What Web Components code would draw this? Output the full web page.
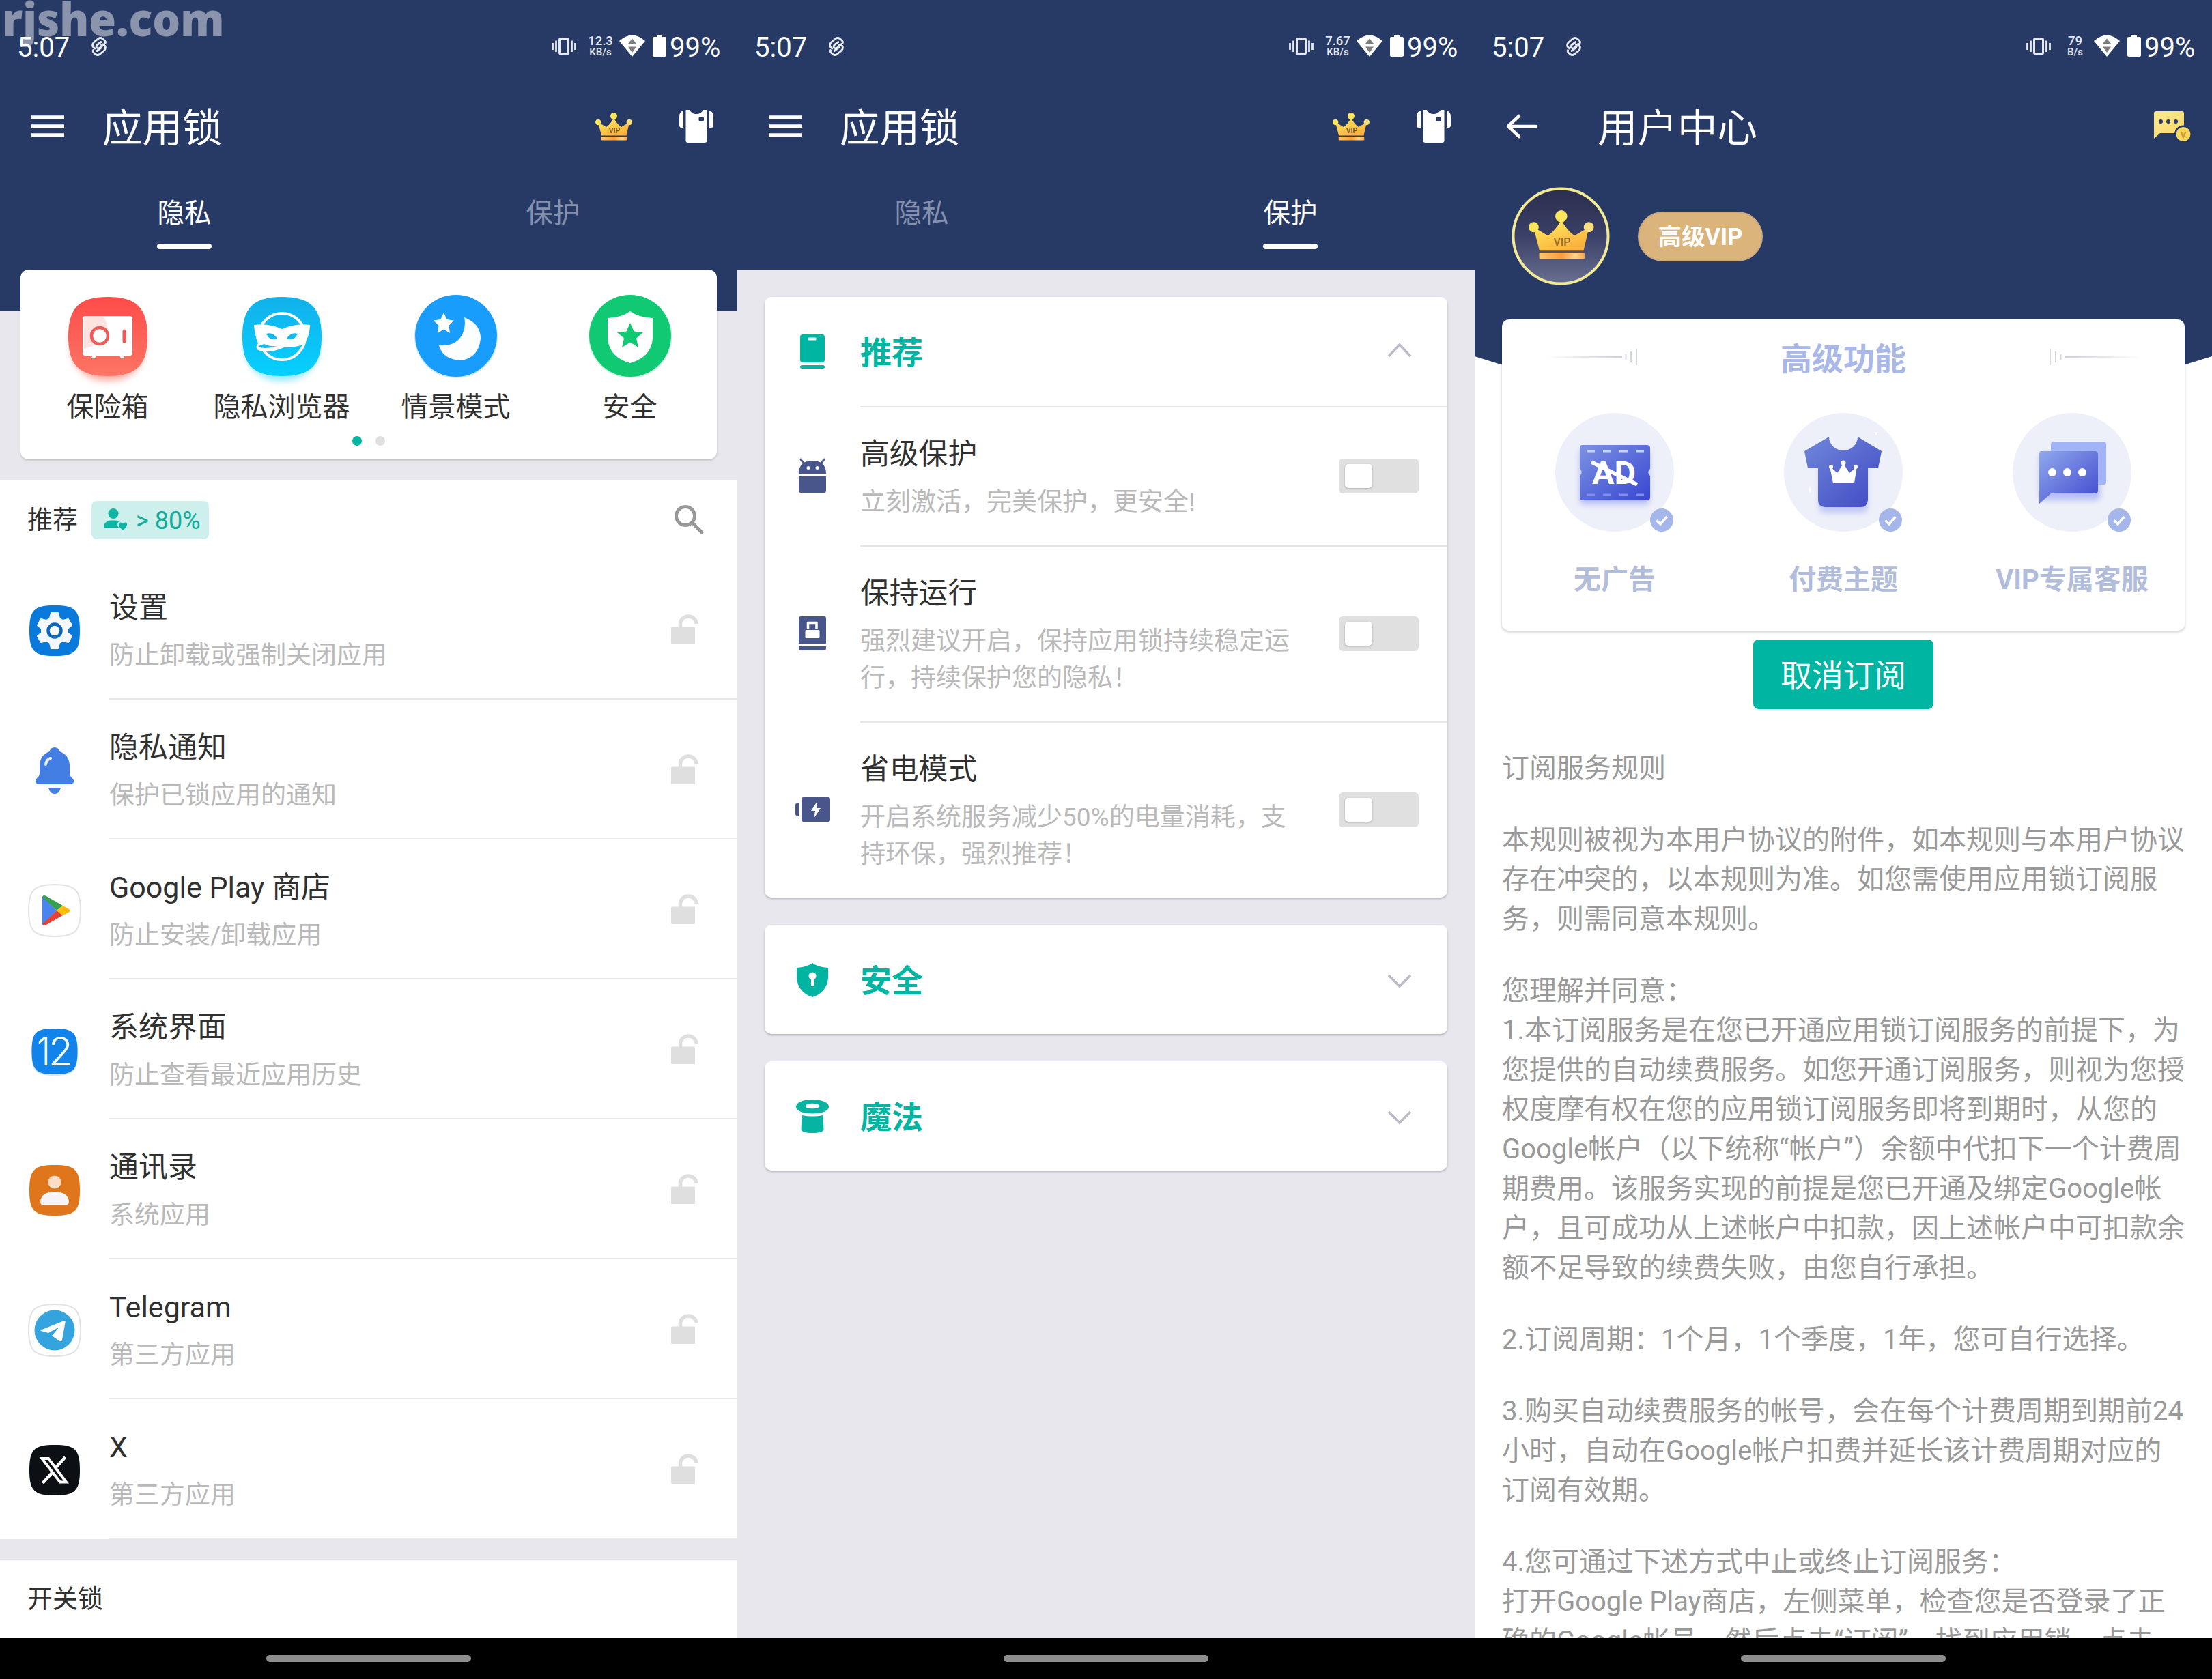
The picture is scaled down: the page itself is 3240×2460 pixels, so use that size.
<!DOCTYPE html>
<html lang="zh-CN">
<head>
<meta charset="UTF-8">
<title>应用锁</title>
<style>
  html, body {
    margin: 0;
    padding: 0;
  }
  body {
    position: relative;
    width: 3240px;
    height: 2460px;
    overflow: hidden;
    display: flex;
    background: #fff;
    font-family: Roboto, "Noto Sans CJK SC", sans-serif;
    text-spacing-trim: space-all;
    --navy: #273a66;
    --teal: #00b6a3;
    --page: #e8e7ed;
    --ink: #303030;
    --muted: #b9b9b9;
  }
</style>
</head>
<body>

<phone-screen>
  <status-bar rate="12.3" unit="KB/s"></status-bar>
  <app-bar title="应用锁">
    <svg-icon slot="nav" name="menu"></svg-icon>
    <svg-icon name="crown"></svg-icon>
    <svg-icon name="shirt"></svg-icon>
  </app-bar>
  <tab-bar active="0"></tab-bar>
  <quick-card>
    <quick-item icon="safe">保险箱</quick-item>
    <quick-item icon="mask">隐私浏览器</quick-item>
    <quick-item icon="moon">情景模式</quick-item>
    <quick-item icon="shieldStar">安全</quick-item>
  </quick-card>
  <list-head title="推荐" badge="&gt; 80%"></list-head>
  <app-row icon="gear" title="设置">防止卸载或强制关闭应用</app-row>
  <app-row icon="bell" title="隐私通知">保护已锁应用的通知</app-row>
  <app-row icon="play" title="Google Play 商店">防止安装/卸载应用</app-row>
  <app-row icon="twelve" title="系统界面">防止查看最近应用历史</app-row>
  <app-row icon="contacts" title="通讯录">系统应用</app-row>
  <app-row icon="telegram" title="Telegram">第三方应用</app-row>
  <app-row icon="xlogo" title="X">第三方应用</app-row>
  <list-head title="开关锁" spaced></list-head>
</phone-screen>

<phone-screen gray>
  <status-bar rate="7.67" unit="KB/s"></status-bar>
  <app-bar title="应用锁">
    <svg-icon slot="nav" name="menu"></svg-icon>
    <svg-icon name="crown"></svg-icon>
    <svg-icon name="shirt"></svg-icon>
  </app-bar>
  <tab-bar active="1"></tab-bar>
  <card-stack>
    <protect-card icon="phone" title="推荐" open>
      <protect-row icon="android" title="高级保护">立刻激活，完美保护，更安全!</protect-row>
      <protect-row icon="keepLock" title="保持运行">强烈建议开启，保持应用锁持续稳定运<br>行，持续保护您的隐私！</protect-row>
      <protect-row icon="battery" title="省电模式">开启系统服务减少50%的电量消耗，支<br>持环保，强烈推荐！</protect-row>
    </protect-card>
    <protect-card icon="shieldKey" title="安全"></protect-card>
    <protect-card icon="hat" title="魔法"></protect-card>
  </card-stack>
</phone-screen>

<phone-screen curved>
  <status-bar rate="79" unit="B/s"></status-bar>
  <app-bar title="用户中心" wide>
    <svg-icon slot="nav" name="back"></svg-icon>
    <svg-icon name="message"></svg-icon>
  </app-bar>
  <vip-profile>高级VIP</vip-profile>
  <vip-card title="高级功能">
    <vip-feature icon="noAd">无广告</vip-feature>
    <vip-feature icon="tee">付费主题</vip-feature>
    <vip-feature icon="chat">VIP专属客服</vip-feature>
  </vip-card>
  <sub-button>取消订阅</sub-button>
  <rule-text>
    <p>订阅服务规则</p>
    <p>本规则被视为本用户协议的附件，如本规则与本用户协议<br>存在冲突的，以本规则为准。如您需使用应用锁订阅服<br>务，则需同意本规则。</p>
    <p>您理解并同意：<br>1.本订阅服务是在您已开通应用锁订阅服务的前提下，为<br>您提供的自动续费服务。如您开通订阅服务，则视为您授<br>权度摩有权在您的应用锁订阅服务即将到期时，从您的<br>Google帐户（以下统称“帐户”）余额中代扣下一个计费周<br>期费用。该服务实现的前提是您已开通及绑定Google帐<br>户，且可成功从上述帐户中扣款，因上述帐户中可扣款余<br>额不足导致的续费失败，由您自行承担。</p>
    <p>2.订阅周期：1个月，1个季度，1年，您可自行选择。</p>
    <p>3.购买自动续费服务的帐号，会在每个计费周期到期前24<br>小时，自动在Google帐户扣费并延长该计费周期对应的<br>订阅有效期。</p>
    <p>4.您可通过下述方式中止或终止订阅服务：<br>打开Google Play商店，左侧菜单，检查您是否登录了正<br>确的Google帐号，然后点击“订阅”，找到应用锁，点击</p>
  </rule-text>
</phone-screen>

<water-mark>rjshe.com</water-mark>

<script>
// name: [width, height, markup]
const CROWN = `
  <defs>
    <linearGradient id="cg" x1="0" y1="0" x2="0.6" y2="1">
      <stop offset="0" stop-color="#fbf06a"/><stop offset=".5" stop-color="#fdd04f"/><stop offset="1" stop-color="#fbb03c"/>
    </linearGradient>
    <linearGradient id="cb" x1="0" y1="0" x2="1" y2="0">
      <stop offset="0" stop-color="#fbc96a"/><stop offset=".5" stop-color="#f99f3a"/><stop offset=".8" stop-color="#fdd48a"/><stop offset="1" stop-color="#f9a94a"/>
    </linearGradient>
  </defs>
  <path d="M4 14 L16 21 Q22 17 27 8 Q32 17 38 21 L50 14 L45.500 33.500 H9 Z" fill="url(#cg)"/>
  <rect x="8.800" y="35" width="37.500" height="5.500" rx="1" fill="url(#cb)"/>
  <circle cx="27" cy="5" r="5" fill="#fbe75e"/>
  <circle cx="4.200" cy="14" r="4.200" fill="#fae65c"/>
  <circle cx="49.800" cy="14" r="4.200" fill="#fbdf80"/>`;

const ICONS = {
  menu: [48, 32, `<path d="M0 3H48M0 16H48M0 29H48" stroke="#fff" stroke-width="5.500"/>`],
  back: [46, 36, `<path d="M44 18H4M19 3L3 18L19 33" fill="none" stroke="#fff" stroke-width="4.500" stroke-linecap="round" stroke-linejoin="round"/>`],
  crown: [54, 41, CROWN + `<text x="28" y="30" font-size="10.500" text-anchor="middle" fill="#6b4a1c" font-weight="500">VIP</text>`],
  shirt: [50, 49, `<path d="M6 1V26H3Q0 26 0 22V9Q0 3 6 1ZM44 1V26H47Q50 26 50 22V9Q50 3 44 1Z" fill="#fff"/>
    <path d="M9.500 0H15Q18 6 25 6Q32 6 35 0H40.500V45Q40.500 48 37 48H13Q9.500 48 9.500 45Z" fill="#fff"/>
    <rect x="28.500" y="10.500" width="7.500" height="6" rx="1.500" fill="#273a66"/>`],
  message: [54, 45, `<defs><linearGradient id="mg" x1="0" y1="0" x2="1" y2="1"><stop offset="0" stop-color="#fbe88f"/><stop offset="1" stop-color="#f6d868"/></linearGradient></defs>
    <path d="M3 0H41Q44 0 44 3V28Q44 32 40 32H9L0 40V3Q0 0 3 0Z" fill="url(#mg)"/>
    <circle cx="10" cy="15" r="3" fill="#273a66"/><circle cx="21" cy="15" r="3" fill="#273a66"/><circle cx="32" cy="15" r="3" fill="#273a66"/>
    <circle cx="43" cy="33.500" r="13" fill="#273a66"/><circle cx="43" cy="33.500" r="10.500" fill="#f8d75e"/>
    <path d="M39.500 30L43 37.500L46.500 30" fill="none" stroke="#d29a2e" stroke-width="2.500"/>`],
  link: [24, 30, `<g fill="none" stroke="#e8ebf2" stroke-width="2.800" stroke-linecap="round" stroke-linejoin="round">
    <path d="M6 18Q2.500 16 2.500 13Q2.500 10.500 5 8.500L11 3.500Q14 1.500 17 3.500L19.500 5.500Q22.500 8 21 10.500L13 17Q10.500 19 8.500 16.500Q7.500 14.500 9.500 12.500L15 8.500"/>
    <path d="M18 12Q21.500 14 21.500 17Q21.500 19.500 19 21.500L13 26.500Q10 28.500 7 26.500L4.500 24.500Q2.500 22.500 3.500 20.500M15.500 13Q17 15.500 14.500 17.500L9 21.500"/></g>`],
  vibrate: [36, 26, `<g fill="none" stroke="#e6e9f1"><rect x="11.500" y="1.700" width="13" height="22" rx="1.500" stroke-width="3"/>
    <path d="M6.500 4.500V21M1.500 8V18M29.500 4.500V21M34.500 8V18" stroke-width="2.800"/></g>`],
  wifi: [38, 32, `<path d="M0 9Q19 -8 38 9L19 32Z" fill="#fff"/><path d="M13 13L19 5.500L25 13ZM13 17.500H25L19 26Z" fill="#7d7d7d"/>`],
  cell: [20, 32, `<path d="M6 0H14V3H18Q20 3 20 5V30Q20 32 18 32H2Q0 32 0 30V5Q0 3 2 3H6Z" fill="#fff"/>`],
  search: [45, 45, `<circle cx="17" cy="17" r="13.500" fill="none" stroke="#989898" stroke-width="5"/><path d="M27 27L41 41" stroke="#989898" stroke-width="5" stroke-linecap="round"/>`],
  unlock: [40, 46, `<rect x="0" y="20.500" width="35" height="25.500" rx="1.500" fill="#dfdfdf"/>
    <path d="M13.500 22V14.500A12 12 0 0 1 37 14.500V16" fill="none" stroke="#dfdfdf" stroke-width="5.500"/>`],
  people: [34, 33, `<g fill="#0db4a2"><circle cx="14" cy="7.500" r="7.500"/><path d="M0 29V27Q1 18 10 17.500H17Q21 17.700 22.500 19Q18.500 22 21 26.500L23 29Z"/>
    <path d="M28 32Q20.500 26 22 22Q25 19 28 22.500Q31 19 34 22Q35 26 28 32Z"/></g>`],

  safe: [136, 136, `<defs><linearGradient id="sf" x1="0" y1="0" x2="0" y2="1"><stop offset="0" stop-color="#fd4c49"/><stop offset="1" stop-color="#fc7565"/></linearGradient>
    <filter id="sfb" x="-30%" y="-30%" width="160%" height="160%"><feGaussianBlur stdDeviation="5"/></filter></defs>
    <rect x="13" y="20" width="110" height="114" rx="50" fill="#fd9a8e" opacity=".8" filter="url(#sfb)"/>
    <path d="M68 11C110 11 126 27 126 69S110 127 68 127S10 111 10 69S26 11 68 11Z" fill="url(#sf)"/>
    <path d="M46 94H52L49 101H44ZM84 94H90L92 101H87Z" fill="#fff"/>
    <rect x="31" y="39" width="73" height="58" rx="4" fill="#fff"/>
    <path d="M33 40H60Q68 45 68 67Q60 79 33 87Z" fill="#fde2e0"/>
    <circle cx="56" cy="68" r="12" fill="#fff" stroke="#ee5a57" stroke-width="4.500"/>
    <path d="M92 61V76" stroke="#ee5a57" stroke-width="5" stroke-linecap="round"/>`],
  mask: [136, 136, `<defs><linearGradient id="mk" x1="0" y1="0" x2="0" y2="1"><stop offset="0" stop-color="#12b1ea"/><stop offset="1" stop-color="#05d0ff"/></linearGradient>
    <filter id="mkb" x="-30%" y="-30%" width="160%" height="160%"><feGaussianBlur stdDeviation="5"/></filter></defs>
    <rect x="13" y="20" width="110" height="114" rx="50" fill="#7fe2ff" opacity=".8" filter="url(#mkb)"/>
    <path d="M68 11C110 11 126 27 126 69S110 127 68 127S10 111 10 69S26 11 68 11Z" fill="url(#mk)"/>
    <circle cx="68" cy="69" r="34" fill="none" stroke="#fff" stroke-width="4"/>
    <path d="M27 52Q48 49 68 58Q88 49 109 52Q108 79 92 83Q80 85 71 85Q48 95 33 89Q28 85 33 79Q28 67 27 52Z" fill="#fff"/>
    <path d="M33 83Q40 89 62 83Q50 84 42 80Z" fill="#12bdf3"/>
    <path d="M45 65Q55 62 61 72Q50 76 45 65ZM91 65Q81 62 75 72Q86 76 91 65Z" fill="#12b9ef"/>`],
  moon: [136, 136, `<circle cx="68" cy="69" r="61" fill="#8fd0ff" opacity=".5"/><circle cx="68" cy="68" r="60" fill="#199dfd"/>
    <path d="M80 41Q104 50 104 72Q101 101 74 104Q48 102 43 82Q66 84 76 68Q83 55 80 41Z" fill="#fdfeff"/>
    <path d="M50 34L54.500 44L65 45.500L57.500 53L59 64L50 58.500L41 64L42.500 53L35 45.500L45.500 44Z" fill="#fff"/>`],
  shieldStar: [136, 136, `<circle cx="68" cy="69" r="61" fill="#8fe6b8" opacity=".5"/><circle cx="68" cy="68" r="60" fill="#12c973"/>
    <path d="M68 32Q80 41 101 42V72Q99 99 68 108Q37 99 35 72V42Q56 41 68 32Z" fill="#fff"/>
    <path d="M68 49L73.500 61.500L87 63L77 71.500L80 85L68 77.500L56 85L59 71.500L49 63L62.500 61.500Z" fill="#12c973"/>`],

  gear: [76, 76, `<path d="M38 1C68 1 75 8 75 38S68 75 38 75S1 68 1 38S8 1 38 1Z" fill="#0a79dc"/>
    <path d="M33 12H43L45 20L50 23L58 21L63 30L57 35V41L63 46L58 55L50 53L45 56L43 64H33L31 56L26 53L18 55L13 46L19 41V35L13 30L18 21L26 23L31 20Z" fill="#f5f8fb" stroke="#f5f8fb" stroke-width="2" stroke-linejoin="round"/>
    <circle cx="38" cy="38" r="9.500" fill="#f8fbfe" stroke="#0a66bd" stroke-width="4.500"/>`],
  bell: [58, 70, `<path d="M29 1Q35 1 36.500 7Q50 12 51 27V39Q51 43 55 46Q60 52 54 55H4Q-2 52 3 46Q7 43 7 39V27Q8 12 21.500 7Q23 1 29 1Z" fill="#437ee4"/>
    <path d="M20 60H38Q36 69 29 69Q22 69 20 60Z" fill="#437ee4"/><path d="M16 26Q17 19 23 17" fill="none" stroke="#e8f0fd" stroke-width="4" stroke-linecap="round"/>`],
  play: [80, 80, `<path d="M40 2C70 2 78 10 78 40S70 78 40 78S2 70 2 40S10 2 40 2Z" fill="#fff" stroke="#e3e3e5" stroke-width="2"/>
    <path d="M22 19V61L43 40Z" fill="#4a84f0"/><path d="M22 20Q23 17 27 18.500L52 33L43 40Z" fill="#36a04c"/>
    <path d="M22 60Q23 63 27 61.500L52 47L43 40Z" fill="#e64235"/><path d="M52 33L61 38Q64 40 61 42.500L52 47L43 40Z" fill="#fdbd0b"/>`],
  twelve: [76, 76, `<path d="M38 8C66 8 72 14 72 41S66 75 38 75S4 68 4 41S10 8 38 8Z" fill="#c9d3e2" opacity=".6"/>
    <path d="M38 6C65 6 71.500 12 71.500 39.500S65 73 38 73S4.500 67 4.500 39.500S10 6 38 6Z" fill="#1283ea"/>
    <text x="12" y="60" font-family="Inter" font-size="57" font-weight="300" textLength="20" lengthAdjust="spacingAndGlyphs" fill="#f0fbff">1</text>
    <text x="29" y="60" font-family="Inter" font-size="57" font-weight="300" textLength="36" lengthAdjust="spacingAndGlyphs" fill="#f0fbff">2</text>`],
  contacts: [76, 76, `<path d="M38 1C68 1 75 8 75 38S68 75 38 75S1 68 1 38S8 1 38 1Z" fill="#df761b"/>
    <circle cx="38" cy="26" r="9.500" fill="#fbdcc6"/><path d="M17 54Q19 40 38 40Q57 40 59 54Q59 60 53 60H23Q17 60 17 54Z" fill="#f6f4f6"/>`],
  telegram: [80, 80, `<path d="M40 2C70 2 78 10 78 40S70 78 40 78S2 70 2 40S10 2 40 2Z" fill="#fff" stroke="#e3e3e5" stroke-width="2"/>
    <circle cx="40" cy="40" r="29.500" fill="#33a4de"/><path d="M19 40L54 26Q56 26 55.500 29L51 54Q50 58 46 55L36 48L47 35L31 44L20 41Z" fill="#fff"/>`],
  xlogo: [76, 76, `<path d="M38 1C68 1 75 8 75 38S68 75 38 75S1 68 1 38S8 1 38 1Z" fill="#0c1014"/>
    <path d="M19.500 21H29L55 55.500H46Z" fill="none" stroke="#fff" stroke-width="4"/><path d="M53.500 19L39.500 34.500M35 41L20.500 57" stroke="#fff" stroke-width="4.500"/>`],

  phone: [36, 50, `<rect x="0" y="0" width="36" height="41" rx="4" fill="#00b5a2"/><rect x="12" y="4.500" width="11.500" height="4" rx="1" fill="#fff"/><rect x="0" y="45" width="36" height="5" rx="2.500" fill="#00b5a2"/>`],
  android: [40, 50, `<path d="M3 1L7 7M37 1L33 7" stroke="#49568c" stroke-width="3" stroke-linecap="round"/>
    <path d="M0 22Q0 3 20 3Q40 3 40 22ZM0 26H40V47Q40 50 37 50H3Q0 50 0 47Z" fill="#49568c"/><circle cx="14" cy="13.500" r="2.500" fill="#fff"/><circle cx="27" cy="13.500" r="2.500" fill="#fff"/>`],
  keepLock: [40, 50, `<path d="M3 0H37Q40 0 40 3V40H0V3Q0 0 3 0ZM0 44H40V47Q40 50 37 50H3Q0 50 0 47Z" fill="#49568c"/>
    <rect x="9.500" y="20" width="21" height="12" rx="1.500" fill="#fff"/><path d="M13.500 18V9.500H26V18" fill="none" stroke="#fff" stroke-width="3.500" stroke-linejoin="round"/>`],
  battery: [51, 36, `<path d="M5 8V28Q0 28 0 24V12Q0 8 5 8Z" fill="#49568c"/><rect x="9" y="0" width="42" height="36" rx="3" fill="#49568c"/>
    <path d="M32 6L23 20H29L27 31L37 16H31Z" fill="#fff"/>`],
  shieldKey: [46, 52, `<path d="M23 2Q31 8 46 9V24Q44 45 23 52Q2 45 0 24V9Q15 8 23 2Z" fill="#00b4a1"/><circle cx="23" cy="21" r="5.500" fill="#fff"/><path d="M21 22H25.500V35Q23 37 21 35Z" fill="#fff"/>`],
  hat: [48, 48, `<path d="M24 0C38 0 48 4.500 48 10.500S38 20.500 24 20.500S0 16.500 0 10.500S10 0 24 0Z" fill="#07b4a2"/><ellipse cx="24" cy="9.500" rx="10.500" ry="3.800" fill="#fff"/>
    <path d="M8.500 23Q24 26 39.500 23L40.500 44Q39 49 24 49Q9 49 7.500 44Z" fill="#07b4a2"/>`],
  up: [36, 22, `<path d="M2 18L18 1L34 18" fill="none" stroke="#babac8" stroke-width="3.500"/>`],
  down: [36, 22, `<path d="M2 5L18 21L34 5" fill="none" stroke="#babac8" stroke-width="3.500"/>`],

  avatar: [144, 144, `<defs><linearGradient id="av" x1="0" y1="0" x2="0" y2="1"><stop offset="0" stop-color="#2b2e4d"/><stop offset=".5" stop-color="#3a4068"/><stop offset="1" stop-color="#6a7090"/></linearGradient></defs>
    <circle cx="72" cy="72" r="69.500" fill="url(#av)" stroke="#f3ea96" stroke-width="4"/>
    <g transform="translate(25 34) scale(1.770)">${CROWN}</g>
    <text x="74" y="86" font-size="16" text-anchor="middle" fill="#97692b" font-weight="500">VIP</text>`],
  check: [34, 34, `<circle cx="17" cy="17" r="17" fill="#a5b7ea"/><path d="M9.500 17.500L15 23L24.500 12" fill="none" stroke="#fff" stroke-width="3.500"/>`],
  noAd: [174, 174, `<defs><linearGradient id="ad" x1="0" y1="0" x2="1" y2="1"><stop offset="0" stop-color="#7d92e2"/><stop offset="1" stop-color="#3846d2"/></linearGradient>
    <filter id="adb" x="-30%" y="-30%" width="160%" height="160%"><feGaussianBlur stdDeviation="5"/></filter></defs>
    <circle cx="87" cy="87" r="87" fill="#eef0f9"/><rect x="36" y="54" width="102" height="80" rx="5" fill="#8f9bf0" opacity=".6" filter="url(#adb)"/>
    <path d="M40 47H134Q139 47 139 51V82A6 6 0 0 0 139 92V124Q139 128 134 128H40Q36 128 36 124V92A6 6 0 0 0 36 82V51Q36 47 40 47Z" fill="url(#ad)"/>
    <path d="M46 56H58M70 56H82M94 56H106M118 56H130" stroke="#c7d2ff" stroke-width="3"/><path d="M46 120H58M70 120H82M94 120H106M118 120H130" stroke="#7f90e8" stroke-width="3"/>
    <text x="86" y="104" text-anchor="middle" font-size="46" font-weight="700" textLength="64" lengthAdjust="spacingAndGlyphs" fill="#fff">AD</text>
    <path d="M53 72L120 105" stroke="#fff" stroke-width="5.500"/>`],
  tee: [174, 174, `<defs><linearGradient id="te" x1="0" y1="0" x2="1" y2="1"><stop offset="0" stop-color="#7088da"/><stop offset="1" stop-color="#4049c4"/></linearGradient>
    <filter id="teb" x="-30%" y="-30%" width="160%" height="160%"><feGaussianBlur stdDeviation="5"/></filter></defs>
    <circle cx="87" cy="87" r="87" fill="#eef0f9"/><rect x="52" y="60" width="70" height="86" rx="6" fill="#8f9bf0" opacity=".5" filter="url(#teb)"/>
    <path d="M66 35A21 20 0 0 0 108 35L143 56L138 81H123V128Q122 138 112 138H60Q50 137 50 128V81H35L30 56Z" fill="url(#te)"/>
    <path d="M67 78L78 88L87 74L96 88L107 78L103 103H72Z" fill="#fff"/><circle cx="87" cy="73" r="3.500" fill="#fff"/><circle cx="69" cy="79" r="3" fill="#fff"/><circle cx="105" cy="79" r="3" fill="#fff"/>
    <path d="M133 28L135 33L137 28ZM36 112L38 107L40 112L38 117Z" fill="#fff"/>`],
  chat: [174, 174, `<defs><linearGradient id="ct" x1="0" y1="0" x2="1" y2="1"><stop offset="0" stop-color="#90a9ec"/><stop offset="1" stop-color="#4048cf"/></linearGradient>
    <filter id="ctb" x="-30%" y="-30%" width="160%" height="160%"><feGaussianBlur stdDeviation="5"/></filter></defs>
    <circle cx="87" cy="87" r="87" fill="#eef0f9"/><rect x="40" y="60" width="88" height="68" rx="5" fill="#8f9bf0" opacity=".6" filter="url(#ctb)"/>
    <path d="M60 42H133Q137 42 137 46V101Q137 105 133 105H56V46Q56 42 60 42Z" fill="#a2b4f8"/>
    <path d="M42 56H120Q125 56 125 60V114Q125 118 120 118H56L39 133V60Q39 56 42 56Z" fill="url(#ct)"/>
    <circle cx="58" cy="87" r="6" fill="#fff"/><circle cx="80" cy="87" r="6" fill="#fff"/><circle cx="102" cy="87" r="6" fill="#fff"/>`],
  flourish: [138, 26, `<defs><linearGradient id="fl" x1="0" y1="0" x2="1" y2="0"><stop offset="0" stop-color="#cdd0da" stop-opacity="0"/><stop offset="1" stop-color="#cdd0da"/></linearGradient></defs>
    <rect x="4" y="12" width="112" height="2.500" fill="url(#fl)"/><path d="M121.500 9V17M129 5V21M137 1V25" stroke="#d5d8e2" stroke-width="2"/>`],
};

class SvgIcon extends HTMLElement {
  connectedCallback() {
    const [w, h, body] = ICONS[this.getAttribute("name")];
    if (!this.shadowRoot) this.attachShadow({ mode: "open" });
    this.shadowRoot.innerHTML = `
      <style>
        :host { display: block; flex: none; width: ${w}px; height: ${h}px; }
        svg { display: block; overflow: visible; }
      </style>
      <svg width="${w}" height="${h}" viewBox="0 0 ${w} ${h}">${body}</svg>`;
  }
}
customElements.define("svg-icon", SvgIcon);

// Small helper so that every component renders its own shadow root the same way.
function component(name, render) {
  customElements.define(name, class extends HTMLElement {
    connectedCallback() {
      if (this.shadowRoot) return;
      this.attachShadow({ mode: "open" });
      this.shadowRoot.innerHTML = render(this);
    }
  });
}

component("phone-screen", (el) => `
  <style>
    :host {
      position: relative;
      display: flex;
      flex-direction: column;
      width: 1080px;
      height: 2460px;
      flex: none;
      overflow: hidden;
      background: ${el.hasAttribute("gray") ? "var(--page)" : "#fff"};
    }
    .content { height: 2400px; overflow: hidden; position: relative; }
    .curve { position: absolute; left: 0; top: 0; }
    .stack { position: relative; display: flex; flex-direction: column; }
    .nav { height: 60px; background: #000; display: flex; align-items: center; justify-content: center; }
    .pill { width: 300px; height: 10px; border-radius: 5px; background: #8d8d8d; }
  </style>
  <div class="content">
    ${el.hasAttribute("curved")
      ? `<svg class="curve" width="1080" height="640"><path d="M0 0H1080V522Q540 697 0 522Z" fill="#273a66"/></svg>`
      : ""}
    <div class="stack"><slot></slot></div>
  </div>
  <div class="nav"><div class="pill"></div></div>`);

component("status-bar", (el) => `
  <style>
    :host { display: flex; align-items: center; height: 136px; padding: 0 23px 0 25px; box-sizing: border-box;
      color: #fff; font-size: 40px; line-height: 48px; background: var(--navy); }
    .time { margin-right: auto; padding-top: 3px; }
    .link { margin-right: 651px; }
    .rate { display: flex; flex-direction: column; align-items: center; width: 37px; margin-left: 17px;
      font-size: 18.500px; line-height: 17px; font-weight: 500; color: #e6e9f1; }
    .rate small { font-size: 15px; line-height: 15px; }
    .wifi { margin-left: 9px; margin-right: 11px; margin-bottom: 3px; }
    .cell { margin-bottom: 3px; }
    .pct { margin-left: 5px; width: 76px; padding-top: 3px; }
  </style>
  <span class="time">5:07</span>
  <svg-icon class="link" name="link"></svg-icon>
  <svg-icon name="vibrate"></svg-icon>
  <span class="rate"><span>${el.getAttribute("rate")}</span><small>${el.getAttribute("unit")}</small></span>
  <svg-icon class="wifi" name="wifi"></svg-icon>
  <svg-icon class="cell" name="cell"></svg-icon>
  <span class="pct">99%</span>`);

component("app-bar", (el) => {
  const wide = el.hasAttribute("wide");
  return `
  <style>
    :host { display: flex; align-items: center; height: 98px; padding: 0 ${wide ? 31 : 35}px 0 46px; background: var(--navy); color: #fff; }
    h1 { margin: 0 auto 0 ${wide ? 88 : 56}px; font-size: 58.500px; line-height: 70px; font-weight: 400; padding-top: 5px; }
    .actions { display: flex; align-items: center; gap: 69px; }
  </style>
  <slot name="nav"></slot>
  <h1>${el.getAttribute("title")}</h1>
  <div class="actions"><slot></slot></div>`;
});

component("tab-bar", (el) => {
  const active = Number(el.getAttribute("active"));
  return `
  <style>
    :host { display: grid; grid-template-columns: 1fr 1fr; height: 161px; background: var(--navy); font-size: 39.500px; line-height: 46px; }
    .tab { display: flex; flex-direction: column; align-items: center; padding-top: 56px; color: #8590ae; }
    .tab.on { color: #fff; }
    .tab.on::after { content: ""; width: 80px; height: 8px; margin-top: 21px; border-radius: 4px; background: #fff; }
  </style>
  ${["隐私", "保护"].map((t, i) => `<div class="tab ${i === active ? "on" : ""}">${t}</div>`).join("")}`;
});

component("quick-card", () => `
  <style>
    :host { display: block; padding: 0 30px 30px; background: linear-gradient(var(--navy) 60px, var(--page) 60px); }
    .card { height: 278px; box-sizing: border-box; padding-top: 29px; border-radius: 12px; background: #fff; box-shadow: 0 2px 3px rgba(0,0,0,.16); }
    .items { display: grid; grid-template-columns: repeat(4, 1fr); }
    .dots { display: flex; justify-content: center; gap: 20px; margin-top: 17px; }
    i { width: 14px; height: 14px; border-radius: 50%; background: #e0e0e0; }
    i.on { background: var(--teal); }
  </style>
  <div class="card">
    <div class="items"><slot></slot></div>
    <div class="dots"><i class="on"></i><i></i></div>
  </div>`);

component("quick-item", (el) => `
  <style>
    :host { display: flex; flex-direction: column; align-items: center; color: var(--ink); font-size: 40px; line-height: 50px; white-space: nowrap; }
    span { margin-top: 12px; }
  </style>
  <svg-icon name="${el.getAttribute("icon")}"></svg-icon>
  <span><slot></slot></span>`);

component("list-head", (el) => `
  <style>
    :host { display: flex; align-items: center; height: 117px; padding: 0 48px 0 40px; color: var(--ink); background: #fff; font-size: 37px; line-height: 46px;
      ${el.hasAttribute("spaced") ? "border-top: 30px solid var(--page);" : ""} }
    .name { padding-top: ${el.hasAttribute("spaced") ? 0 : 2}px; }
    .badge { display: flex; align-items: center; gap: 13px; height: 56px; margin-left: 20px; padding: 0 14px 0 18px; border-radius: 8px; background: #cdf0ec; color: #12ab9b; font-size: 36px; }
    .badge span { width: 93px; white-space: nowrap; padding-top: 3px; }
    svg-icon.find { margin-left: auto; }
  </style>
  <span class="name">${el.getAttribute("title")}</span>
  ${el.hasAttribute("badge")
    ? `<div class="badge"><svg-icon name="people"></svg-icon><span>${el.getAttribute("badge")}</span></div>
       <svg-icon class="find" name="search"></svg-icon>`
    : ""}`);

component("app-row", (el) => `
  <style>
    :host { display: flex; height: 205px; background: #fff; }
    .icon { width: 160px; display: flex; align-items: center; justify-content: center; padding-top: 2px; }
    .main { flex: 1; display: flex; align-items: center; justify-content: space-between; padding-right: 57px; border-bottom: 2px solid #e8e8e8; }
    .text { padding-top: 3px; }
    h2 { margin: 0; font-size: 43px; line-height: 58px; font-weight: 400; color: var(--ink); }
    p { margin: 17px 0 0; font-size: 37px; line-height: 50px; color: var(--muted); }
    .lock { margin-bottom: 2px; }
  </style>
  <div class="icon"><svg-icon name="${el.getAttribute("icon")}"></svg-icon></div>
  <div class="main">
    <div class="text"><h2>${el.getAttribute("title")}</h2><p><slot></slot></p></div>
    <svg-icon class="lock" name="unlock"></svg-icon>
  </div>`);

component("card-stack", () => `
  <style>
    :host { display: flex; flex-direction: column; gap: 40px; padding: 40px; height: 2005px; box-sizing: border-box; background: var(--page); }
  </style>
  <slot></slot>`);

component("protect-card", (el) => `
  <style>
    :host { display: block; border-radius: 10px; background: #fff; box-shadow: 0 2px 3px rgba(0,0,0,.22); }
    .head { display: flex; align-items: center; height: 160px; }
    .icon { width: 140px; display: flex; justify-content: center; }
    h2 { flex: 1; margin: 0; padding-top: 3px; font-size: 46px; line-height: 60px; font-weight: 700; color: var(--teal); }
    .head > svg-icon { margin-right: 52px; }
  </style>
  <div class="head">
    <div class="icon"><svg-icon name="${el.getAttribute("icon")}"></svg-icon></div>
    <h2>${el.getAttribute("title")}</h2>
    <svg-icon name="${el.hasAttribute("open") ? "up" : "down"}"></svg-icon>
  </div>
  <slot></slot>`);

component("toggle-switch", () => `
  <style>
    :host { display: flex; align-items: center; width: 117px; height: 51px; padding-left: 9px; box-sizing: border-box; border-radius: 6px; background: #e0e0e0; }
    i { width: 40px; height: 35px; border-radius: 5px; background: #fff; box-shadow: 0 1px 3px rgba(0,0,0,.25); }
  </style>
  <i></i>`);

component("protect-row", (el) => `
  <style>
    :host { display: flex; align-items: stretch; }
    .icon { width: 140px; display: flex; align-items: center; justify-content: center; }
    .main { flex: 1; display: flex; align-items: center; justify-content: space-between; padding: 39px 42px 36px 0; border-top: 2px solid #e6e6e8; }
    h3 { margin: 0; font-size: 42.800px; line-height: 58px; font-weight: 400; color: var(--ink); }
    p { margin: 15px 0 0; font-size: 37px; line-height: 54px; color: var(--muted); white-space: nowrap; }
    toggle-switch { margin-bottom: 4px; }
  </style>
  <div class="icon"><svg-icon name="${el.getAttribute("icon")}"></svg-icon></div>
  <div class="main">
    <div><h3>${el.getAttribute("title")}</h3><p><slot></slot></p></div>
    <toggle-switch></toggle-switch>
  </div>`);

component("vip-profile", () => `
  <style>
    :host { display: flex; align-items: center; height: 224px; margin-bottom: 10px; padding-left: 54px; }
    .badge { display: flex; align-items: center; justify-content: center; width: 183px; height: 73px; margin-left: 41px; padding-top: 2px; box-sizing: border-box;
      border: 2px solid #c7a987; border-radius: 37px; background: #dbb47b; color: #fff; font-size: 34.500px; line-height: 48px; font-weight: 700; }
  </style>
  <svg-icon name="avatar"></svg-icon>
  <span class="badge"><slot></slot></span>`);

component("vip-card", (el) => `
  <style>
    :host { display: block; height: 456px; margin: 0 40px; padding-top: 28px; box-sizing: border-box; border-radius: 10px; background: #fff; box-shadow: 0 2px 4px rgba(0,0,0,.22); }
    .title { display: flex; align-items: center; justify-content: space-between; padding: 0 60px; }
    .title svg-icon { margin-bottom: 6px; }
    .title svg-icon:last-child { transform: scaleX(-1); }
    h2 { margin: 0; font-size: 46px; line-height: 60px; font-weight: 700; color: #a9b8e6; }
    .features { display: grid; grid-template-columns: repeat(3, 335px); justify-content: center; margin-top: 49px; }
  </style>
  <div class="title">
    <svg-icon name="flourish"></svg-icon>
    <h2>${el.getAttribute("title")}</h2>
    <svg-icon name="flourish"></svg-icon>
  </div>
  <div class="features"><slot></slot></div>`);

component("vip-feature", (el) => `
  <style>
    :host { display: flex; flex-direction: column; align-items: center; font-size: 40px; line-height: 56px; font-weight: 700; color: #b2bddb; white-space: nowrap; }
    .disc { position: relative; }
    .tick { position: absolute; right: 1px; bottom: 0; }
    .label { margin-top: 43px; }
  </style>
  <div class="disc">
    <svg-icon name="${el.getAttribute("icon")}"></svg-icon>
    <svg-icon class="tick" name="check"></svg-icon>
  </div>
  <div class="label"><slot></slot></div>`);

component("sub-button", () => `
  <style>
    :host { display: flex; align-items: center; justify-content: center; align-self: center; width: 264px; height: 102px; margin-top: 13px;
      border-radius: 8px; background: var(--teal); color: #fff; font-size: 46px; line-height: 60px; }
    span { padding-top: 4px; }
  </style>
  <span><slot></slot></span>`);

component("rule-text", () => `
  <style>
    :host { display: block; margin-top: 58px; padding-left: 40px; font-size: 40px; line-height: 57.950px; color: #999; white-space: nowrap; }
    ::slotted(p) { margin: 0 0 47.200px; }
  </style>
  <slot></slot>`);

component("water-mark", () => `
  <style>
    :host { position: absolute; left: 3px; top: -19px; transform: scaleX(.945); transform-origin: left; font-family: "Open Sans", sans-serif; font-size: 68px; line-height: 92px; font-weight: 800; color: rgba(255,255,255,.46); }
  </style>
  <slot></slot>`);
</script>
</body>
</html>
